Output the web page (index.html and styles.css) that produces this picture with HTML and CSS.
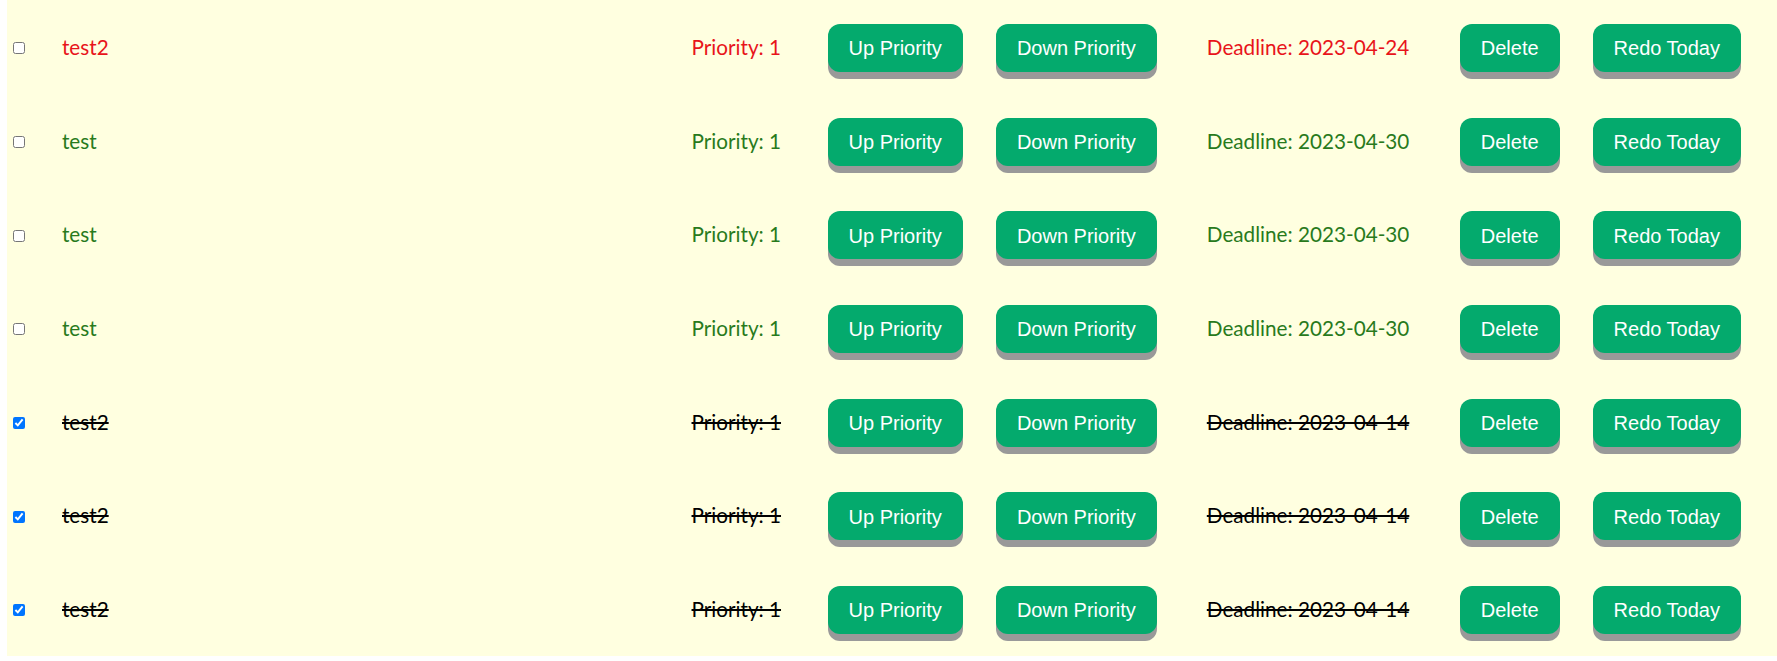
FILE: index.html
```html
<!DOCTYPE html>
<html lang="en">
<head>
<meta charset="utf-8">
<title>Todo list</title>
<link rel="stylesheet" href="styles.css">
</head>
<body>
<ul class="todo-list">
  <li class="todo overdue">
    <input type="checkbox" class="check">
    <span class="name">test2</span>
    <span class="priority">Priority: 1</span>
    <button class="btn btn-up">Up Priority</button>
    <button class="btn btn-down">Down Priority</button>
    <span class="deadline">Deadline: 2023-04-24</span>
    <button class="btn btn-delete">Delete</button>
    <button class="btn btn-redo">Redo Today</button>
  </li>
  <li class="todo pending">
    <input type="checkbox" class="check">
    <span class="name">test</span>
    <span class="priority">Priority: 1</span>
    <button class="btn btn-up">Up Priority</button>
    <button class="btn btn-down">Down Priority</button>
    <span class="deadline">Deadline: 2023-04-30</span>
    <button class="btn btn-delete">Delete</button>
    <button class="btn btn-redo">Redo Today</button>
  </li>
  <li class="todo pending">
    <input type="checkbox" class="check">
    <span class="name">test</span>
    <span class="priority">Priority: 1</span>
    <button class="btn btn-up">Up Priority</button>
    <button class="btn btn-down">Down Priority</button>
    <span class="deadline">Deadline: 2023-04-30</span>
    <button class="btn btn-delete">Delete</button>
    <button class="btn btn-redo">Redo Today</button>
  </li>
  <li class="todo pending">
    <input type="checkbox" class="check">
    <span class="name">test</span>
    <span class="priority">Priority: 1</span>
    <button class="btn btn-up">Up Priority</button>
    <button class="btn btn-down">Down Priority</button>
    <span class="deadline">Deadline: 2023-04-30</span>
    <button class="btn btn-delete">Delete</button>
    <button class="btn btn-redo">Redo Today</button>
  </li>
  <li class="todo done">
    <input type="checkbox" class="check" checked>
    <span class="name">test2</span>
    <span class="priority">Priority: 1</span>
    <button class="btn btn-up">Up Priority</button>
    <button class="btn btn-down">Down Priority</button>
    <span class="deadline">Deadline: 2023-04-14</span>
    <button class="btn btn-delete">Delete</button>
    <button class="btn btn-redo">Redo Today</button>
  </li>
  <li class="todo done">
    <input type="checkbox" class="check" checked>
    <span class="name">test2</span>
    <span class="priority">Priority: 1</span>
    <button class="btn btn-up">Up Priority</button>
    <button class="btn btn-down">Down Priority</button>
    <span class="deadline">Deadline: 2023-04-14</span>
    <button class="btn btn-delete">Delete</button>
    <button class="btn btn-redo">Redo Today</button>
  </li>
  <li class="todo done">
    <input type="checkbox" class="check" checked>
    <span class="name">test2</span>
    <span class="priority">Priority: 1</span>
    <button class="btn btn-up">Up Priority</button>
    <button class="btn btn-down">Down Priority</button>
    <span class="deadline">Deadline: 2023-04-14</span>
    <button class="btn btn-delete">Delete</button>
    <button class="btn btn-redo">Redo Today</button>
  </li>
</ul>
</body>
</html>
```

FILE: styles.css
```css
html, body {
  background: #ffffff;
}

body {
  margin: 0 0 0 7px;
  font-family: Lato, "Noto Sans", sans-serif;
  font-size: 20.7px;
}

.todo-list {
  list-style: none;
  margin: 0;
  padding: 0;
  background: #ffffe0;
}

.todo {
  display: flex;
  align-items: center;
  height: 93.7px;
}

.check {
  margin: 3px 0 0 6px;
  width: 12px;
  height: 12px;
  flex: none;
}

.name {
  flex: 1;
  margin-left: 37px;
}

.priority {
  width: 86px;
  margin-right: 50px;
  white-space: nowrap;
}

.deadline {
  width: 203px;
  margin-right: 50px;
  white-space: nowrap;
}

.btn {
  font-family: "Liberation Sans", Arial, sans-serif;
  font-size: 20px;
  color: #ffffff;
  background: #04aa6d;
  border: none;
  border-radius: 12px;
  height: 48px;
  margin-top: 2px;
  padding: 2px 21px 0;
  box-shadow: 0 7px #999999;
  white-space: nowrap;
  flex: none;
  cursor: pointer;
}

.btn-up,
.btn-delete {
  margin-right: 33px;
}

.btn-down {
  margin-right: 50px;
}

.btn-redo {
  margin-right: 36px;
}

.overdue .name,
.overdue .priority,
.overdue .deadline {
  color: #e8141a;
}

.pending .name,
.pending .priority,
.pending .deadline {
  color: #287a1c;
}

.done .name,
.done .priority,
.done .deadline {
  color: #000000;
  text-decoration: line-through;
  text-decoration-thickness: 2px;
}
```
